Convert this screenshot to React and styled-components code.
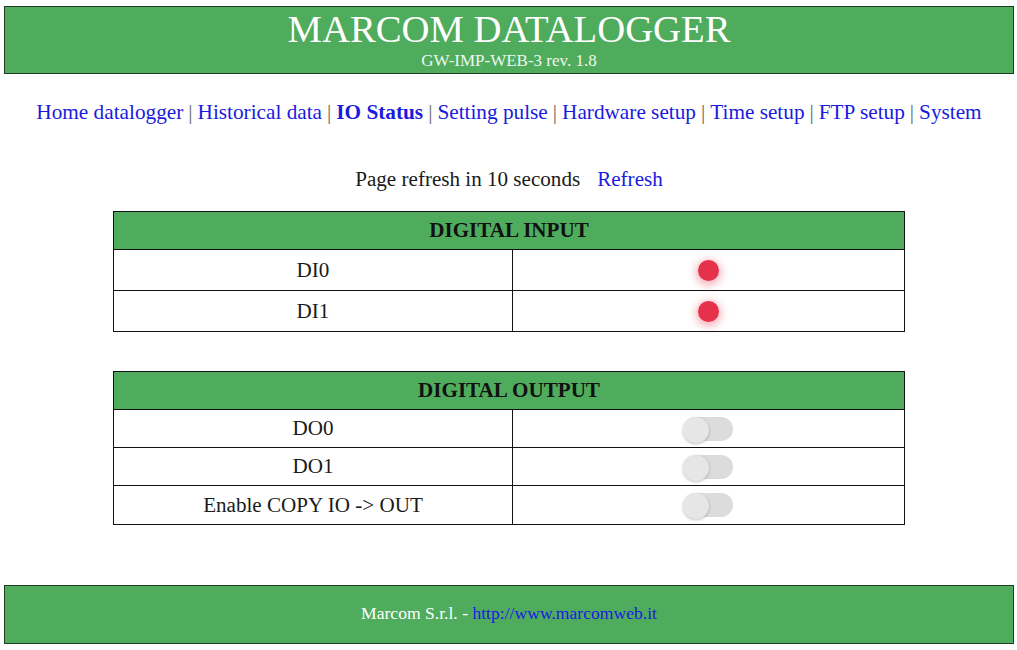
import React from 'react'
import styled, { createGlobalStyle } from 'styled-components'

const links = ['Home datalogger', 'Historical data', 'IO Status', 'Setting pulse', 'Hardware setup', 'Time setup', 'FTP setup', 'System']

const Columns = () => (
  <colgroup>
    <LeftCol />
    <col />
  </colgroup>
)

const App = () => {
  return (
    <Page>
      <GlobalStyle />
      <Header>
        <Title>MARCOM DATALOGGER</Title>
        <Subtitle>GW-IMP-WEB-3 rev. 1.8</Subtitle>
      </Header>
      <Nav>
        {links.map((link, i) => (
          <React.Fragment key={link}>
            {i > 0 && <Divider>|</Divider>}
            <NavLink href="#" $active={link === 'IO Status'}>{link}</NavLink>
          </React.Fragment>
        ))}
      </Nav>
      <RefreshRow>
        Page refresh in 10 seconds
        <RefreshLink href="#">Refresh</RefreshLink>
      </RefreshRow>
      <InputTable>
        <Columns />
        <thead>
          <tr><HeadCell colSpan={2}>DIGITAL INPUT</HeadCell></tr>
        </thead>
        <tbody>
          {['DI0', 'DI1'].map((name) => (
            <InputRow key={name}>
              <Cell>{name}</Cell>
              <Cell><Led /></Cell>
            </InputRow>
          ))}
        </tbody>
      </InputTable>
      <OutputTable>
        <Columns />
        <thead>
          <tr><HeadCell colSpan={2}>DIGITAL OUTPUT</HeadCell></tr>
        </thead>
        <tbody>
          {['DO0', 'DO1', 'Enable COPY IO -> OUT'].map((name) => (
            <OutputRow key={name}>
              <Cell>{name}</Cell>
              <Cell><Toggle><Knob /></Toggle></Cell>
            </OutputRow>
          ))}
        </tbody>
      </OutputTable>
      <Footer>
        Marcom S.r.l. - <FooterLink href="#">http://www.marcomweb.it</FooterLink>
      </Footer>
    </Page>
  )
}

export default App

const GlobalStyle = createGlobalStyle`
  html, body {
    margin: 0;
    padding: 0;
    background: #fff;
  }
  body {
    font-family: "Liberation Serif", "Times New Roman", serif;
    color: #1a1a1a;
  }
`;

const Page = styled.div`
  display: flex;
  flex-direction: column;
  align-items: center;
  width: 1017px;
  height: 650px;
  padding-top: 6px;
  box-sizing: border-box;
  overflow: hidden;
`;

const Header = styled.header`
  box-sizing: border-box;
  width: 1010px;
  height: 68px;
  margin-left: 1px;
  background: #4fac5d;
  border: 1px solid #1f3d26;
  color: #fff;
  text-align: center;
`;

const Title = styled.div`
  font-size: 38.7px;
  line-height: 44px;
`;

const Subtitle = styled.div`
  font-size: 17px;
  line-height: 18px;
  margin-top: 1px;
  color: #eef7ef;
`;

const Nav = styled.nav`
  margin-top: 26px;
  margin-left: 1px;
  height: 24px;
  font-size: 21.25px;
  line-height: 24px;
  white-space: nowrap;
  color: #666;
`;

const Divider = styled.span`
  margin: 0 5px;
`;

const NavLink = styled.a`
  color: #1a1ae0;
  text-decoration: none;
  font-weight: ${(props) => (props.$active ? 700 : 400)};
`;

const RefreshRow = styled.div`
  margin-top: 43px;
  margin-left: 1px;
  font-size: 21.1px;
  line-height: 24px;
  white-space: nowrap;
`;

const RefreshLink = styled.a`
  margin-left: 17px;
  color: #1a1ae0;
  text-decoration: none;
`;

const DataTable = styled.table`
  box-sizing: border-box;
  width: 792px;
  margin-left: 1px;
  border-collapse: collapse;
  table-layout: fixed;
  font-size: 21.1px;
  text-align: center;
`;

const LeftCol = styled.col`
  width: 399px;
`;

const InputTable = styled(DataTable)`
  margin-top: 20px;
`;

const OutputTable = styled(DataTable)`
  margin-top: 39px;
`;

const HeadCell = styled.th`
  height: 37px;
  padding: 0;
  background: #4fac5d;
  border: 1px solid #111;
  font-weight: 700;
  color: #111;
`;

const InputRow = styled.tr`
  height: 41px;
`;

const OutputRow = styled.tr`
  height: 38px;

  &:last-child {
    height: 39px;
  }
`;

const Cell = styled.td`
  padding: 0;
  border: 1px solid #111;
`;

const Led = styled.span`
  display: block;
  width: 21px;
  height: 21px;
  margin: 0 auto;
  border-radius: 50%;
  background: #e6314c;
  box-shadow: 0 2px 8px 2px rgba(230, 49, 76, 0.4);
`;

const Toggle = styled.span`
  display: block;
  position: relative;
  width: 49px;
  height: 24px;
  margin: 0 auto;
  border-radius: 12px;
  background: #dcdcdc;
`;

const Knob = styled.span`
  position: absolute;
  left: -1px;
  top: 0;
  width: 26px;
  height: 26px;
  border-radius: 50%;
  background: #e6e6e6;
  box-shadow: 0 1px 3px rgba(0, 0, 0, 0.25);
`;

const Footer = styled.footer`
  box-sizing: border-box;
  display: block;
  width: 1010px;
  height: 59px;
  margin-top: 60px;
  margin-left: 1px;
  background: #4fac5d;
  border: 1px solid #1f3d26;
  color: #fff;
  font-size: 17.6px;
  line-height: 55px;
  text-align: center;
`;

const FooterLink = styled.a`
  color: #1a1ae0;
  text-decoration: none;
`;
